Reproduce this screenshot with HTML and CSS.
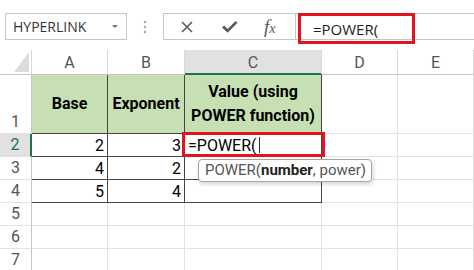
FILE: index.html
```html
<!DOCTYPE html>
<html lang="en">
<head>
    <meta charset="utf-8">
    <title>POWER function</title>
    <link rel="stylesheet" href="styles.css">
</head>
<body>
    <div class="formula-bar">
        <div class="name-box">
            <span class="name-text">HYPERLINK</span>
            <span class="caret"></span>
        </div>
        <svg class="grip" width="4" height="14" viewBox="0 0 4 14">
            <circle cx="2" cy="2" r="1.2" fill="#a6a6a6"/>
            <circle cx="2" cy="7" r="1.2" fill="#a6a6a6"/>
            <circle cx="2" cy="12" r="1.2" fill="#a6a6a6"/>
        </svg>
        <div class="fx-buttons">
            <svg class="icon-cancel" width="14" height="14" viewBox="0 0 14 14">
                <path d="M2 2 L12 12 M12 2 L2 12" stroke="#595959" stroke-width="1.6" fill="none"/>
            </svg>
            <svg class="icon-enter" width="17" height="14" viewBox="0 0 17 14">
                <path d="M1 7.5 L3.2 5.6 L6.6 9 L14.6 1 L16.4 3 L6.6 12.8 Z" fill="#595959"/>
            </svg>
            <span class="icon-fx"><span class="fx-f">f</span><span class="fx-x">x</span></span>
        </div>
        <div class="formula-input">
            <div class="formula-mark">=POWER(</div>
        </div>
    </div>

    <div class="sheet">
        <div class="hdr corner"><span class="corner-tri"></span></div>
        <div class="hdr col">A</div>
        <div class="hdr col">B</div>
        <div class="hdr col col-active">C</div>
        <div class="hdr col">D</div>
        <div class="hdr col">E</div>

        <div class="hdr row">1</div>
        <div class="cell head">Base</div>
        <div class="cell head">Exponent</div>
        <div class="cell head">Value (using<br>POWER function)</div>
        <div class="cell"></div>
        <div class="cell"></div>

        <div class="hdr row row-active">2</div>
        <div class="cell data first">2</div>
        <div class="cell data">3</div>
        <div class="cell data last active">=POWER(<span class="caret-line"></span>
            <div class="tooltip">POWER(<b>number</b>, power)</div>
        </div>
        <div class="cell"></div>
        <div class="cell"></div>

        <div class="hdr row">3</div>
        <div class="cell data first">4</div>
        <div class="cell data">2</div>
        <div class="cell data last"></div>
        <div class="cell"></div>
        <div class="cell"></div>

        <div class="hdr row">4</div>
        <div class="cell data first">5</div>
        <div class="cell data">4</div>
        <div class="cell data last"></div>
        <div class="cell"></div>
        <div class="cell"></div>

        <div class="hdr row">5</div>
        <div class="cell"></div>
        <div class="cell"></div>
        <div class="cell"></div>
        <div class="cell"></div>
        <div class="cell"></div>

        <div class="hdr row">6</div>
        <div class="cell"></div>
        <div class="cell"></div>
        <div class="cell"></div>
        <div class="cell"></div>
        <div class="cell"></div>

        <div class="hdr row">7</div>
        <div class="cell"></div>
        <div class="cell"></div>
        <div class="cell"></div>
        <div class="cell"></div>
        <div class="cell"></div>
    </div>
</body>
</html>
```

FILE: styles.css
```css
body {
    margin: 0;
    width: 474px;
    height: 270px;
    overflow: hidden;
    background-color: #fff;
    font-family: 'Roboto', 'Liberation Sans', sans-serif;
    color: #000;
}

/* formula bar */

.formula-bar {
    display: flex;
    align-items: center;
    height: 27px;
    padding-top: 13px;
    padding-left: 5px;
}

.name-box {
    display: flex;
    align-items: center;
    justify-content: space-between;
    box-sizing: border-box;
    width: 122px;
    height: 27px;
    padding: 0 8px 0 7px;
    border: 1px solid #c6c6c6;
    font-family: 'Open Sans', sans-serif;
    font-size: 14px;
    color: #333;
}

.caret {
    width: 0;
    height: 0;
    border-left: 3px solid transparent;
    border-right: 3px solid transparent;
    border-top: 3px solid #777;
}

.grip {
    margin: 0 16px 0 16px;
}

.fx-buttons {
    display: flex;
    align-items: center;
    box-sizing: border-box;
    width: 133px;
    height: 27px;
    padding-left: 16px;
    border: 1px solid #c6c6c6;
}

.icon-enter {
    margin-left: 27px;
}

.icon-fx {
    margin-left: 26px;
    font-family: 'Liberation Serif', serif;
    font-style: italic;
    color: #595959;
}

.fx-f {
    font-size: 19px;
}

.fx-x {
    font-size: 14px;
}

.formula-input {
    flex: 1;
    align-self: stretch;
    box-sizing: border-box;
    border-top: 1px solid #c6c6c6;
    border-bottom: 1px solid #c6c6c6;
    padding-left: 2px;
}

.formula-mark {
    box-sizing: border-box;
    width: 117px;
    height: 31px;
    margin-top: -1px;
    padding: 3px 0 0 12px;
    border: 3px solid #e0151f;
    font-family: 'Open Sans', sans-serif;
    font-size: 15px;
    color: #222;
}

/* sheet */

.sheet {
    display: grid;
    grid-template-columns: 32px 76px 77px 137px 76px 76px;
    grid-template-rows: 25px 59px 23px 23px 23px 23px 23px 23px;
    margin-top: 10px;
    font-size: 16px;
}

.hdr {
    box-sizing: border-box;
    border-right: 1px solid #d9d9d9;
    border-bottom: 1px solid #c6c6c6;
    color: #555;
    background-color: #fff;
    font-size: 16px;
}

.corner {
    position: relative;
}

.corner-tri {
    position: absolute;
    right: 2px;
    bottom: 2px;
    width: 15px;
    height: 20px;
    background-color: #dcdcdc;
    clip-path: polygon(100% 0, 100% 100%, 0 100%);
}

.col {
    display: flex;
    align-items: center;
    justify-content: center;
    padding-top: 1px;
}

.col-active {
    background-color: #e1e1e1;
    border-bottom: 2px solid #217346;
}

.row {
    display: flex;
    align-items: flex-end;
    justify-content: center;
    border-right: 1px solid #c6c6c6;
    border-bottom: 1px solid #e1e1e1;
    line-height: 22px;
}

.row-active {
    background-color: #e1e1e1;
    color: #217346;
    border-right: 2px solid #217346;
}

.cell {
    box-sizing: border-box;
    border-right: 1px solid #e1e1e1;
    border-bottom: 1px solid #e1e1e1;
    line-height: 23px;
}

.head {
    display: flex;
    align-items: center;
    justify-content: center;
    text-align: center;
    background-color: #c6e0b4;
    border-right: 1px solid #444;
    border-bottom: 1px solid #444;
    font-weight: bold;
    line-height: 24px;
    white-space: nowrap;
}

.data {
    text-align: right;
    padding-right: 3px;
    border-right: 1px solid #444;
    border-bottom: 1px solid #444;
}

.active {
    position: relative;
    text-align: left;
    padding-left: 3px;
}

.active::after {
    content: "";
    position: absolute;
    left: -3px;
    top: -2px;
    right: -4px;
    bottom: -1px;
    border: 3px solid #e0151f;
}

.caret-line {
    display: inline-block;
    width: 1px;
    height: 16px;
    margin-left: 2px;
    vertical-align: -2px;
    background-color: #333;
}

.tooltip {
    position: absolute;
    left: 13px;
    top: 25px;
    z-index: 2;
    box-sizing: border-box;
    width: 174px;
    height: 23px;
    padding-left: 6px;
    border: 1px solid #a6a6a6;
    border-radius: 4px;
    background-color: #fff;
    box-shadow: 1px 2px 4px rgba(0, 0, 0, 0.18);
    font-size: 15px;
    line-height: 21px;
    color: #555;
    white-space: nowrap;
}

.tooltip b {
    color: #222;
}
```
